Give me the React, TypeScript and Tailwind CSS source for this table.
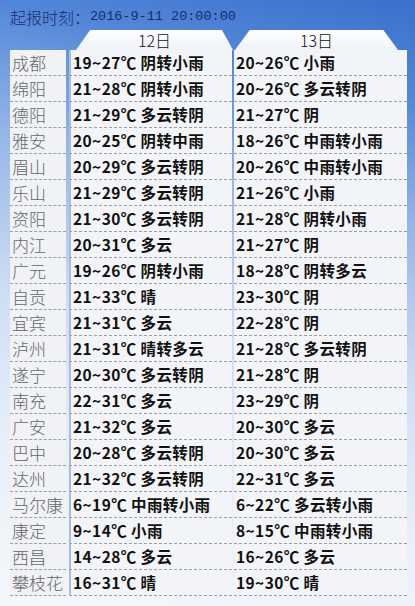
const rows: [string, string, string][] = [
  ["成都", "19~27℃ 阴转小雨", "20~26℃ 小雨"],
  ["绵阳", "21~28℃ 阴转小雨", "20~26℃ 多云转阴"],
  ["德阳", "21~29℃ 多云转阴", "21~27℃ 阴"],
  ["雅安", "20~25℃ 阴转中雨", "18~26℃ 中雨转小雨"],
  ["眉山", "20~29℃ 多云转阴", "20~26℃ 中雨转小雨"],
  ["乐山", "21~29℃ 多云转阴", "21~26℃ 小雨"],
  ["资阳", "21~30℃ 多云转阴", "21~28℃ 阴转小雨"],
  ["内江", "20~31℃ 多云", "21~27℃ 阴"],
  ["广元", "19~26℃ 阴转小雨", "18~28℃ 阴转多云"],
  ["自贡", "21~33℃ 晴", "23~30℃ 阴"],
  ["宜宾", "21~31℃ 多云", "22~28℃ 阴"],
  ["泸州", "21~31℃ 晴转多云", "21~28℃ 多云转阴"],
  ["遂宁", "20~30℃ 多云转阴", "21~28℃ 阴"],
  ["南充", "22~31℃ 多云", "23~29℃ 阴"],
  ["广安", "21~32℃ 多云", "20~30℃ 多云"],
  ["巴中", "20~28℃ 多云转阴", "20~30℃ 多云"],
  ["达州", "21~32℃ 多云转阴", "22~31℃ 多云"],
  ["马尔康", "6~19℃ 中雨转小雨", "6~22℃ 多云转小雨"],
  ["康定", "9~14℃ 小雨", "8~15℃ 中雨转小雨"],
  ["西昌", "14~28℃ 多云", "16~26℃ 多云"],
  ["攀枝花", "16~31℃ 晴", "19~30℃ 晴"],
];

const cjk = "font-['Noto_Sans_CJK_SC',sans-serif]";

export default function App() {
  return (
    <div className="w-[415px] h-[606px] overflow-hidden bg-[linear-gradient(193deg,#3a70cc_0%,#5287d8_14%,#94b5e8_32%,#cfdef4_55%,#eaf0f9_78%,#f5f7fb_100%)]">
      <div className="h-[30px] pl-[10px] pt-[4px] flex items-center text-[#1b2a70] leading-none">
        <span className={`${cjk} font-light text-[16px]`}>起报时刻：</span>
        <span className="font-['Liberation_Mono',monospace] text-[13.5px]">2016-9-11 20:00:00</span>
      </div>

      <div className="h-[20px] flex items-end">
        <div className={`ml-[76px] w-[157px] h-[20px] flex items-end justify-center bg-gradient-to-b from-white to-[#eef2f8] [clip-path:polygon(9%_0,93%_0,100%_100%,0_100%)] ${cjk} font-light text-[16px] text-[#111] leading-[19px]`}>
          12日
        </div>
        <div className={`ml-[2px] w-[163px] h-[20px] flex items-end justify-center bg-gradient-to-b from-white to-[#eef2f8] [clip-path:polygon(9%_0,91%_0,100%_100%,0_100%)] ${cjk} font-light text-[16px] text-[#111] leading-[19px]`}>
          13日
        </div>
      </div>

      <div className="ml-[10px] w-[397px] flex flex-col">
        {rows.map(([city, d12, d13]) => (
          <div key={city} className="h-[26px] flex">
            <div className={`w-[56px] h-full flex items-center pl-[2px] bg-[#f0f2f6] border-b border-dashed border-[#9a9ea6] ${cjk} font-light text-[17px] text-[#666] whitespace-nowrap`}>
              {city}
            </div>
            <div className="w-[3px]" />
            <div className={`w-[163px] h-full flex items-center pl-[2px] bg-[#f2f4f7] border-l-2 border-[#a9bddb] border-b border-b-[#9a9ea6] [border-bottom-style:dashed] ${cjk} font-bold text-[15.5px] tracking-[0.4px] text-[#111] whitespace-nowrap`}>
              {d12}
            </div>
            <div className="w-[2px]" />
            <div className={`flex-1 h-full flex items-center pl-[2px] bg-[#f2f4f7] border-b border-dashed border-[#9a9ea6] ${cjk} font-bold text-[15.5px] tracking-[0.4px] text-[#111] whitespace-nowrap`}>
              {d13}
            </div>
          </div>
        ))}
      </div>
    </div>
  );
}
